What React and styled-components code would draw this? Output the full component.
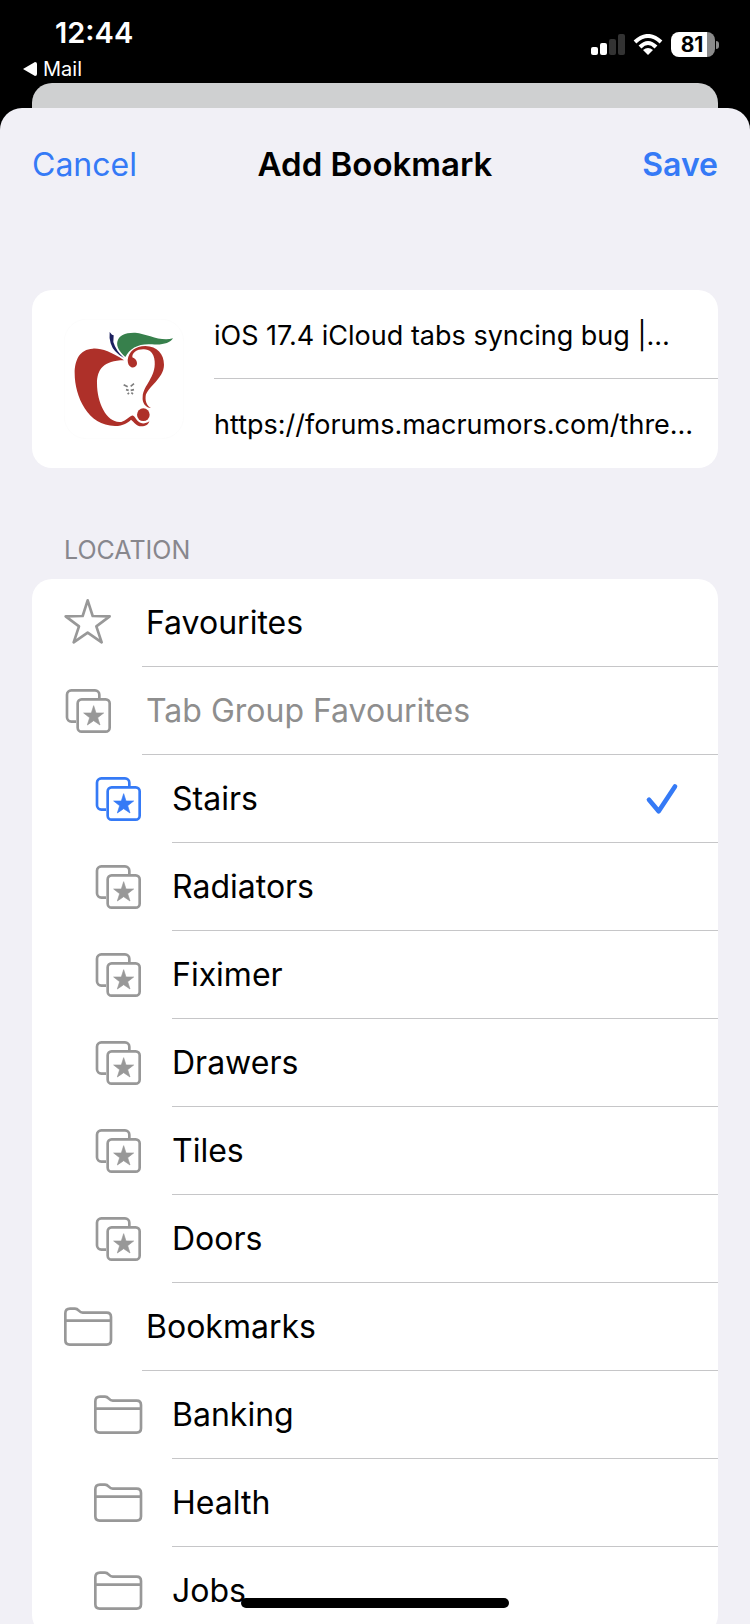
import { useState } from "react";
import styled, { createGlobalStyle } from "styled-components";

const locations = [
    { name: "Favourites", icon: "star" },
    { name: "Tab Group Favourites", icon: "tabs", disabled: true },
    { name: "Stairs", icon: "tabs", nested: true },
    { name: "Radiators", icon: "tabs", nested: true },
    { name: "Fiximer", icon: "tabs", nested: true },
    { name: "Drawers", icon: "tabs", nested: true },
    { name: "Tiles", icon: "tabs", nested: true },
    { name: "Doors", icon: "tabs", nested: true },
    { name: "Bookmarks", icon: "folder" },
    { name: "Banking", icon: "folder", nested: true },
    { name: "Health", icon: "folder", nested: true },
    { name: "Jobs", icon: "folder", nested: true },
];

const StarIcon = () => (
    <RowSvg viewBox="102 237 144 144">
        <path d="M173 241 L188 288 L239 289 L199 319 L215 367 L173 338 L131 367 L147 319 L107 289 L158 288 Z" />
    </RowSvg>
)

const TabsIcon = () => (
    <RowSvg viewBox="102 501 144 144">
        <path d="M208 534 V524 a13 13 0 0 0 -13 -13 H124 a13 13 0 0 0 -13 13 V592 a13 13 0 0 0 13 13 H138" />
        <rect x="143" y="538" width="96" height="97" rx="12" />
        <path
            d="M191 557 L198 579 L221 579 L203 593 L210 615 L191 602 L172 615 L179 593 L161 579 L184 579 Z"
            fill="currentColor"
            strokeWidth="2"
        />
    </RowSvg>
)

const FolderIcon = () => (
    <RowSvg viewBox="42 69 144 144">
        <path d="M46 100 Q46 86 60 86 H75 C87 86 86 98 98 98 H170 Q183 98 183 111 V181 Q183 194 170 194 H59 Q46 194 46 181 Z" />
        <path d="M46 122 H183" />
    </RowSvg>
)

const icons = { star: StarIcon, tabs: TabsIcon, folder: FolderIcon };

const SiteIcon = () => (
    <SiteSvg viewBox="12 -3 360 360" aria-hidden="true">
        <rect x="13" y="-2" width="358" height="358" rx="66" fill="#fff" stroke="#fafafa" strokeWidth="2" />
        <path
            fill="#ae3029"
            d="M192 121 C152 94 122 84 98 86 C60 88 44 118 44 160 C44 230 84 318 165 318 C190 318 204 308 213 299 C222 306 230 319 244 319 C257 319 266 313 268 304 C258 311 245 312 238 307 C226 299 224 284 215 287 C203 292 195 306 178 306 C140 306 111 250 111 190 C111 150 130 121 192 121 Z"
        />
        <path fill="#1b1f5e" d="M149 36 L156 44 L161 46 L160 66 Q168 93 192 114 Q160 97 152 70 Q147 53 149 36 Z" />
        <path
            fill="#37804c"
            d="M196 111 C178 94 169 80 172 65 C176 46 196 37 226 38 C262 41 300 66 339 55 C330 70 306 76 276 73 C236 70 210 84 196 111 Z"
        />
        <path
            fill="#ae3029"
            d="M203 120 C206 94 226 78 256 78 C292 79 312 102 312 134 C312 176 262 200 257 228 C255 246 262 258 273 264 C256 262 246 248 248 230 C250 196 288 172 284 124 C282 98 268 88 252 88 C232 87 216 97 217 112 C227 116 232 124 231 132 C229 140 222 144 214 142 C206 138 203 130 203 120 Z"
        />
        <circle cx="250" cy="284" r="19" fill="#ae3029" />
        <path
            stroke="#7d7d7d"
            strokeWidth="5"
            fill="none"
            d="M191 194 L203 200 M212 199 L222 191 M198 209 L206 211 M212 211 L222 209 M203 223 L207 218 M214 218 L219 222"
        />
    </SiteSvg>
)

const StatusIcons = () => (
    <StatusGroup>
        <svg width="34" height="22" viewBox="0 0 34 22" fill="#fff">
            <rect x="0" y="13" width="7" height="8" rx="2" />
            <rect x="9" y="9" width="7" height="12" rx="2" />
            <rect x="18" y="5" width="7" height="16" rx="2" fill="#333" />
            <rect x="27" y="0" width="7" height="21" rx="2" fill="#333" />
        </svg>
        <svg width="30" height="22" viewBox="0 0 30 22" fill="none" stroke="#fff" strokeWidth="4">
            <path d="M2 8 Q15 -4 28 8" />
            <path d="M7 13 Q15 5 23 13" />
            <path d="M15 21 L10 16 Q15 12 20 16 Z" fill="#fff" stroke="none" />
        </svg>
        <Battery>
            <Level>81</Level>
            <Tip />
        </Battery>
    </StatusGroup>
)

const App = () => {

    const [title, setTitle] = useState("iOS 17.4 iCloud tabs syncing bug |…");
    const [address, setAddress] = useState("https://forums.macrumors.com/thre…");
    const [selected, setSelected] = useState("Stairs");

    return (
        <Screen>
            <GlobalStyle />
            <StatusBar>
                <div>
                    <Time>12:44</Time>
                    <BackLink href="#mail">
                        <svg width="14" height="14" viewBox="0 0 14 14">
                            <path d="M0 7 L12 0 Q14 0 14 2 V12 Q14 14 12 14 Z" fill="#fff" />
                        </svg>
                        Mail
                    </BackLink>
                </div>
                <StatusIcons />
            </StatusBar>
            <BackCard />
            <Sheet>
                <NavBar>
                    <NavButton type="button">Cancel</NavButton>
                    <Title>Add Bookmark</Title>
                    <NavButton type="button" $strong>Save</NavButton>
                </NavBar>
                <Details>
                    <SiteIcon />
                    <Fields>
                        <Field aria-label="Title" value={title} onChange={(e) => setTitle(e.target.value)} />
                        <Field aria-label="Address" value={address} onChange={(e) => setAddress(e.target.value)} />
                    </Fields>
                </Details>
                <SectionTitle>LOCATION</SectionTitle>
                <List>
                    {
                        locations.map((item) => {
                            const Icon = icons[item.icon];
                            const active = item.name === selected;
                            return (
                                <Row
                                    key={item.name}
                                    type="button"
                                    disabled={item.disabled}
                                    $nested={item.nested}
                                    onClick={() => setSelected(item.name)}
                                >
                                    <IconCell $active={active}><Icon /></IconCell>
                                    <Label $nested={item.nested}>
                                        {item.name}
                                        {active &&
                                            <Check viewBox="141 135 90 87">
                                                <path d="M147 181 L176 215 L225 141" />
                                            </Check>
                                        }
                                    </Label>
                                </Row>
                            )
                        })
                    }
                </List>
            </Sheet>
            <HomeIndicator />
        </Screen>
    )
}

const GlobalStyle = createGlobalStyle`
    * {
        box-sizing: border-box;
    }
    body {
        margin: 0;
        background-color: #000;
        font-family: Inter, "Liberation Sans", sans-serif;
    }
    button, input {
        font-family: inherit;
        border: none;
        background: none;
        padding: 0;
    }
    svg {
        display: block;
        flex-shrink: 0;
    }
`

const Screen = styled.div`
    display: flex;
    flex-direction: column;
    height: 100vh;
    overflow: hidden;
`

const StatusBar = styled.header`
    display: flex;
    justify-content: space-between;
    align-items: flex-start;
    height: 83px;
    padding: 14px 31px 0 23px;
    color: #fff;
`

const Time = styled.div`
    padding-left: 32px;
    font-size: 29px;
    font-weight: 600;
    line-height: 38px;
`

const BackLink = styled.a`
    display: flex;
    align-items: center;
    gap: 6px;
    color: #fff;
    font-size: 20px;
    line-height: 34px;
    text-decoration: none;
`

const StatusGroup = styled.div`
    display: flex;
    align-items: center;
    gap: 8px;
    padding-top: 18px;
`

const Battery = styled.div`
    display: flex;
    align-items: center;
    gap: 1px;
`

const Level = styled.span`
    width: 44px;
    padding-right: 2px;
    border-radius: 8px;
    background: linear-gradient(to right, #fff 81%, #8a8a8a 81%);
    color: #000;
    font-size: 21px;
    font-weight: 700;
    line-height: 25px;
    text-align: center;
`

const Tip = styled.span`
    width: 3px;
    height: 8px;
    border-radius: 0 4px 4px 0;
    background-color: #8a8a8a;
`

const BackCard = styled.div`
    height: 25px;
    flex-shrink: 0;
    margin: 0 32px;
    border-radius: 20px 20px 0 0;
    background-color: #cfd0d1;
`

const Sheet = styled.main`
    flex: 1;
    min-height: 0;
    overflow: hidden;
    padding: 0 32px;
    border-radius: 22px 22px 0 0;
    background-color: #f1f0f6;
`

const NavBar = styled.nav`
    display: grid;
    grid-template-columns: 1fr auto 1fr;
    align-items: center;
    height: 112px;
    margin-bottom: 70px;
`

const NavButton = styled.button`
    justify-self: ${({ $strong }) => $strong ? "end" : "start"};
    color: #357af6;
    font-size: 32px;
    font-weight: ${({ $strong }) => $strong ? 600 : 400};
    cursor: pointer;
`

const Title = styled.h1`
    margin: 0;
    font-size: 33px;
    font-weight: 600;
`

const Details = styled.section`
    display: flex;
    align-items: center;
    gap: 30px;
    padding-left: 32px;
    border-radius: 20px;
    background-color: #fff;
`

const SiteSvg = styled.svg`
    width: 120px;
    height: 120px;
`

const Fields = styled.div`
    flex: 1;
    min-width: 0;
`

const Field = styled.input`
    display: block;
    width: 100%;
    height: 89px;
    padding: 2px 20px 0 0;
    color: #000;
    font-size: 27px;
    text-overflow: ellipsis;
    outline: none;
    &:first-child {
        border-bottom: 1px solid #c6c6c8;
    }
`

const SectionTitle = styled.h2`
    margin: 64px 0 11px;
    padding-left: 32px;
    color: #88878d;
    font-size: 25px;
    font-weight: 400;
    line-height: 36px;
`

const List = styled.div`
    border-radius: 20px;
    background-color: #fff;
`

const Row = styled.button`
    display: flex;
    width: 100%;
    height: 88px;
    padding-left: ${({ $nested }) => $nested ? 62 : 32}px;
    color: #000;
    font-size: 32px;
    text-align: left;
    cursor: pointer;
    &:disabled {
        color: #8e8e8e;
        cursor: default;
    }
`

const IconCell = styled.span`
    display: flex;
    align-items: center;
    width: 78px;
    height: 88px;
    color: ${({ $active }) => $active ? "#357af6" : "#989898"};
`

const RowSvg = styled.svg`
    width: 48px;
    height: 48px;
    overflow: visible;
    fill: none;
    stroke: currentColor;
    stroke-width: 8;
    stroke-linejoin: round;
`

const Label = styled.span`
    flex: 1;
    display: flex;
    align-items: center;
    justify-content: space-between;
    height: 88px;
    padding-left: ${({ $nested }) => $nested ? 0 : 4}px;
    border-bottom: 1px solid #c6c6c8;
`

const Check = styled.svg`
    width: 30px;
    height: 30px;
    margin-right: 41px;
    overflow: visible;
    fill: none;
    stroke: #357af6;
    stroke-width: 14;
    stroke-linecap: round;
    stroke-linejoin: round;
`

const HomeIndicator = styled.div`
    position: fixed;
    bottom: 16px;
    left: 50%;
    width: 268px;
    height: 10px;
    margin-left: -134px;
    border-radius: 5px;
    background-color: #000;
`

export default App;
